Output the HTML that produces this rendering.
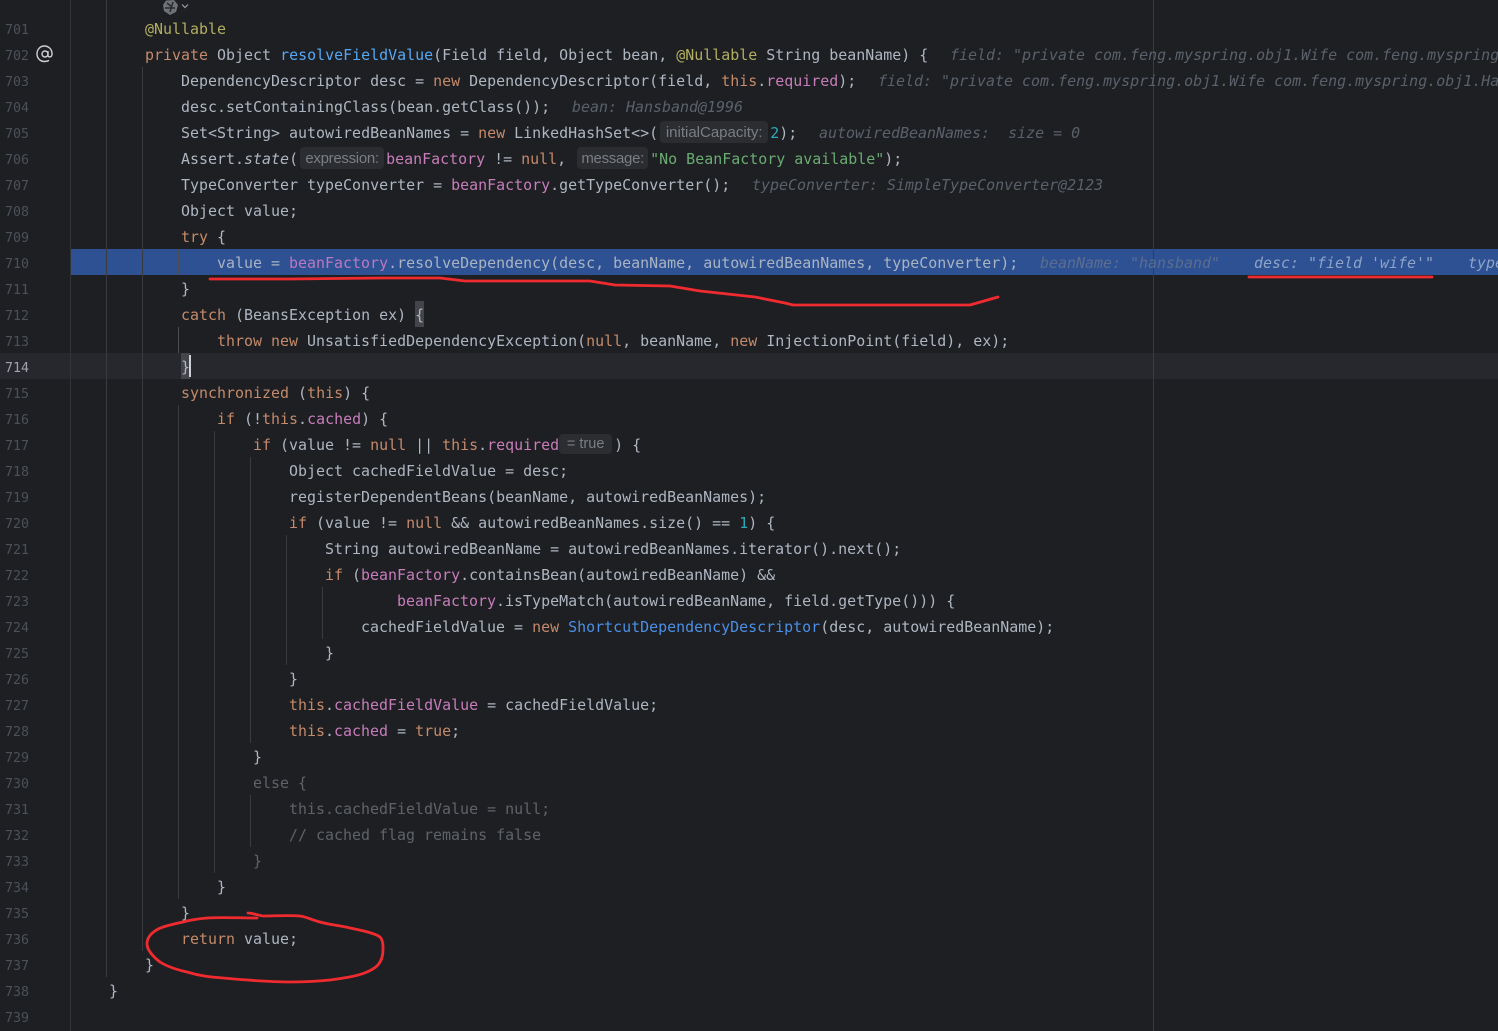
<!DOCTYPE html>
<html><head><meta charset="utf-8"><style>
html,body{margin:0;padding:0;background:#1e1f22}
#r{position:relative;width:1498px;height:1031px;overflow:hidden;background:#1e1f22;font:14.95px/26px "DejaVu Sans Mono","Liberation Mono",monospace;letter-spacing:.01px;color:#aeb6c2}
.l{position:absolute;left:0;height:26px;white-space:pre;margin-top:1px}
.n{position:absolute;left:5px;height:26px;font-size:13.3px;color:#4b5059;line-height:26px;margin-top:3px;letter-spacing:0}
.g{position:absolute;width:1px;background:#393b40}
.k{color:#c48a6b}.f{color:#c77dbb}.m{color:#56a8f5}.a{color:#b3ae60}.s{color:#6aab73}.u{color:#2aacb8}.d{color:#5f6368}
.i{font-style:italic}
.x{position:absolute;white-space:pre;font-style:italic;color:#5a616b;height:26px;margin-top:1px}
.h{display:inline-block;height:22px;margin:1px 2px 0 2px;box-sizing:border-box;background:#2b2d30;border-radius:4px;color:#7a7e85;font:15px/23px "Liberation Sans",sans-serif;text-align:center;vertical-align:top;letter-spacing:-.3px}
</style></head><body><div id="r">
<div style="position:absolute;left:71px;top:249px;width:1427px;height:26px;background:#2d5193"></div>
<div style="position:absolute;left:0;top:353px;width:1498px;height:26px;background:#26282e"></div>
<div style="position:absolute;left:181px;top:353px;width:9px;height:26px;background:#43454a"></div>
<div style="position:absolute;left:415px;top:301px;width:9px;height:26px;background:#43454a"></div>
<div class="g" style="left:70px;top:0;height:1031px;background:#313438"></div>
<div class="g" style="left:106px;top:0;height:977px"></div>
<div class="g" style="left:142px;top:67px;height:884px"></div>
<div class="g" style="left:178px;top:249px;height:26px;background:#4a4d52"></div>
<div class="g" style="left:178px;top:327px;height:26px;background:#4a4d52"></div>
<div class="g" style="left:178px;top:405px;height:494px"></div>
<div class="g" style="left:214px;top:431px;height:442px"></div>
<div class="g" style="left:250px;top:457px;height:286px"></div>
<div class="g" style="left:250px;top:795px;height:52px"></div>
<div class="g" style="left:286px;top:535px;height:130px"></div>
<div class="g" style="left:322px;top:587px;height:52px"></div>
<div class="g" style="left:1153px;top:0;height:1031px;background:#393b40"></div>
<svg style="position:absolute;left:162px;top:0" width="28" height="15" viewBox="0 0 28 15"><path d="M4 0.500L12 0L16 5L14 12L8 15L2 11L1 5Z" fill="#6f7277"/><path d="M5 3L10 7M11 2L8 12M3 8L13 8" stroke="#2a2c30" stroke-width="1.5" fill="none"/><path d="M20 4.5L23 7.5L26 4.5" stroke="#9a9da3" stroke-width="1.2" fill="none"/></svg>
<svg style="position:absolute;left:36px;top:45px" width="18" height="18" viewBox="0 0 18 18"><circle cx="9" cy="9" r="3" fill="none" stroke="#ced0d6" stroke-width="1.4"/><path d="M12 6V10.5C12 12.5 15.8 12.5 16 9.5C16.500 3.500 11.500 1 8.500 1C4 1 1 4.500 1 9C1 13.500 4.500 16.500 8.500 16.500C10.500 16.500 12 16 13 15.300" fill="none" stroke="#ced0d6" stroke-width="1.4"/></svg>

<div class="n" style="top:15px">701</div>
<div class="n" style="top:41px">702</div>
<div class="n" style="top:67px">703</div>
<div class="n" style="top:93px">704</div>
<div class="n" style="top:119px">705</div>
<div class="n" style="top:145px">706</div>
<div class="n" style="top:171px">707</div>
<div class="n" style="top:197px">708</div>
<div class="n" style="top:223px">709</div>
<div class="n" style="top:249px">710</div>
<div class="n" style="top:275px">711</div>
<div class="n" style="top:301px">712</div>
<div class="n" style="top:327px">713</div>
<div class="n" style="top:353px;color:#a1a3ab">714</div>
<div class="n" style="top:379px">715</div>
<div class="n" style="top:405px">716</div>
<div class="n" style="top:431px">717</div>
<div class="n" style="top:457px">718</div>
<div class="n" style="top:483px">719</div>
<div class="n" style="top:509px">720</div>
<div class="n" style="top:535px">721</div>
<div class="n" style="top:561px">722</div>
<div class="n" style="top:587px">723</div>
<div class="n" style="top:613px">724</div>
<div class="n" style="top:639px">725</div>
<div class="n" style="top:665px">726</div>
<div class="n" style="top:691px">727</div>
<div class="n" style="top:717px">728</div>
<div class="n" style="top:743px">729</div>
<div class="n" style="top:769px">730</div>
<div class="n" style="top:795px">731</div>
<div class="n" style="top:821px">732</div>
<div class="n" style="top:847px">733</div>
<div class="n" style="top:873px">734</div>
<div class="n" style="top:899px">735</div>
<div class="n" style="top:925px">736</div>
<div class="n" style="top:951px">737</div>
<div class="n" style="top:977px">738</div>
<div class="n" style="top:1003px">739</div>

<div class="l a" style="top:15px;left:145px">@Nullable</div>
<div class="l" style="top:41px;left:145px"><span class="k">private</span> Object <span class="m">resolveFieldValue</span>(Field field, Object bean, <span class="a">@Nullable</span> String beanName) {</div>
<div class="x" style="top:41px;left:950px">field: "private com.feng.myspring.obj1.Wife com.feng.myspring</div>
<div class="l" style="top:67px;left:181px">DependencyDescriptor desc = <span class="k">new</span> DependencyDescriptor(field, <span class="k">this</span>.<span class="f">required</span>);</div>
<div class="x" style="top:67px;left:878px">field: "private com.feng.myspring.obj1.Wife com.feng.myspring.obj1.Ha</div>
<div class="l" style="top:93px;left:181px">desc.setContainingClass(bean.getClass());</div>
<div class="x" style="top:93px;left:572px">bean: Hansband@1996</div>
<div class="l" style="top:119px;left:181px">Set&lt;String&gt; autowiredBeanNames = <span class="k">new</span> LinkedHashSet&lt;&gt;(<span class="h" style="width:108px;letter-spacing:0">initialCapacity:</span><span class="u">2</span>);</div>
<div class="x" style="top:119px;left:819px">autowiredBeanNames:  size = 0</div>
<div class="l" style="top:145px;left:181px">Assert.<span class="i">state</span>(<span class="h" style="width:84px">expression:</span><span class="f">beanFactory</span> != <span class="k">null</span>, <span class="h" style="width:71px">message:</span><span class="s">"No BeanFactory available"</span>);</div>
<div class="l" style="top:171px;left:181px">TypeConverter typeConverter = <span class="f">beanFactory</span>.getTypeConverter();</div>
<div class="x" style="top:171px;left:752px">typeConverter: SimpleTypeConverter@2123</div>
<div class="l" style="top:197px;left:181px">Object value;</div>
<div class="l" style="top:223px;left:181px"><span class="k">try</span> {</div>
<div class="l" style="top:249px;left:217px;color:#a9b3c2">value = <span style="color:#bd78c0">beanFactory</span>.resolveDependency(desc, beanName, autowiredBeanNames, typeConverter);</div>
<div class="x" style="top:249px;left:1040px;color:#5c6d8f">beanName: "hansband"</div>
<div class="x" style="top:249px;left:1254px;color:#8ea3c8">desc: "field 'wife'"</div>
<div class="x" style="top:249px;left:1468px;color:#8ea3c8">type</div>
<div class="l" style="top:275px;left:181px">}</div>
<div class="l" style="top:301px;left:181px"><span class="k">catch</span> (BeansException ex) {</div>
<div class="l" style="top:327px;left:217px"><span class="k">throw new</span> UnsatisfiedDependencyException(<span class="k">null</span>, beanName, <span class="k">new</span> InjectionPoint(field), ex);</div>
<div class="l" style="top:353px;left:181px">}</div>
<div style="position:absolute;left:189px;top:355px;width:2px;height:22px;background:#ced0d6"></div>
<div class="l" style="top:379px;left:181px"><span class="k">synchronized</span> (<span class="k">this</span>) {</div>
<div class="l" style="top:405px;left:217px"><span class="k">if</span> (!<span class="k">this</span>.<span class="f">cached</span>) {</div>
<div class="l" style="top:431px;left:253px"><span class="k">if</span> (value != <span class="k">null</span> || <span class="k">this</span>.<span class="f">required</span><span class="h" style="width:53px;margin:2px 2px 0 0;font-size:14.5px;letter-spacing:0;height:20px;line-height:21px">= true</span>) {</div>
<div class="l" style="top:457px;left:289px">Object cachedFieldValue = desc;</div>
<div class="l" style="top:483px;left:289px">registerDependentBeans(beanName, autowiredBeanNames);</div>
<div class="l" style="top:509px;left:289px"><span class="k">if</span> (value != <span class="k">null</span> &amp;&amp; autowiredBeanNames.size() == <span class="u">1</span>) {</div>
<div class="l" style="top:535px;left:325px">String autowiredBeanName = autowiredBeanNames.iterator().next();</div>
<div class="l" style="top:561px;left:325px"><span class="k">if</span> (<span class="f">beanFactory</span>.containsBean(autowiredBeanName) &amp;&amp;</div>
<div class="l" style="top:587px;left:397px"><span class="f">beanFactory</span>.isTypeMatch(autowiredBeanName, field.getType())) {</div>
<div class="l" style="top:613px;left:361px">cachedFieldValue = <span class="k">new</span> <span class="m" style="color:#4b8fe6">ShortcutDependencyDescriptor</span>(desc, autowiredBeanName);</div>
<div class="l" style="top:639px;left:325px">}</div>
<div class="l" style="top:665px;left:289px">}</div>
<div class="l" style="top:691px;left:289px"><span class="k">this</span>.<span class="f">cachedFieldValue</span> = cachedFieldValue;</div>
<div class="l" style="top:717px;left:289px"><span class="k">this</span>.<span class="f">cached</span> = <span class="k">true</span>;</div>
<div class="l" style="top:743px;left:253px">}</div>
<div class="l d" style="top:769px;left:253px">else {</div>
<div class="l d" style="top:795px;left:289px">this.cachedFieldValue = null;</div>
<div class="l d" style="top:821px;left:289px">// cached flag remains false</div>
<div class="l d" style="top:847px;left:253px">}</div>
<div class="l" style="top:873px;left:217px">}</div>
<div class="l" style="top:899px;left:181px">}</div>
<div class="l" style="top:925px;left:181px"><span class="k">return</span> value;</div>
<div class="l" style="top:951px;left:145px">}</div>
<div class="l" style="top:977px;left:109px">}</div>

<svg style="position:absolute;left:0;top:0" width="1498" height="1031" viewBox="0 0 1498 1031" fill="none" stroke="#f02b30" stroke-width="2.800" stroke-linecap="round" stroke-linejoin="round">
<path d="M210 279L290 279L380 278L440 278L465 281L500 281L590 281L615 285L670 286L700 291L755 297L785 303L793 305L970 305L998 297"/>
<path d="M1249 277L1432 277"/>
<path d="M257 918C240 918 220 917 207 918C195 919 190 920 183 922C170 925 160 927 155 931C149 935 147 939 147 944C147 949 152 956 160 962C168 967 178 970 187 972C200 976 210 977 223 978C245 980 270 982 290 982C310 982 320 981 330 980C345 978 358 976 367 972C374 969 378 966 380 962C383 957 383 952 383 947C383 942 382 939 380 937C375 933 360 930 350 928C338 925 330 925 320 922C312 920 307 917 300 916C290 915 275 916 263 916C257 915 252 913 248 913"/>
</svg>
</div></body></html>
